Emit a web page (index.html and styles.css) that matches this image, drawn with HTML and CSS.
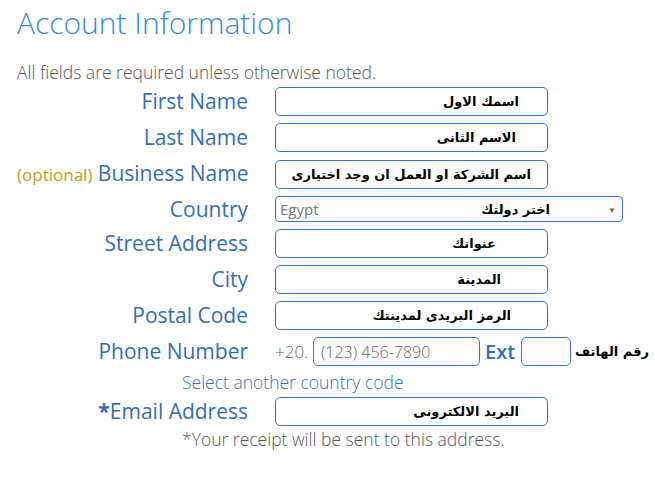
FILE: index.html
```html
<!DOCTYPE html>
<html lang="en">
<head>
<meta charset="utf-8">
<title>Account Information</title>
<link rel="stylesheet" href="styles.css">
</head>
<body>
<div class="page">
  <h1 class="title">Account Information</h1>
  <p class="note">All fields are required unless otherwise noted.</p>
  <div class="form">
    <div class="label">First Name</div>
    <div class="field"><div class="box pr-28"><span class="ar">اسمك الاول</span></div></div>

    <div class="label">Last Name</div>
    <div class="field"><div class="box pr-31"><span class="ar">الاسم الثانى</span></div></div>

    <div class="label"><span class="opt">(optional)</span> Business Name</div>
    <div class="field"><div class="box pr-16"><span class="ar">اسم الشركة او العمل ان وجد اختيارى</span></div></div>

    <div class="label label-short">Country</div>
    <div class="field">
      <div class="select">
        <span class="sel-val">Egypt</span>
        <span class="ar sel-ar">اختر دولتك</span>
        <span class="caret">▼</span>
      </div>
    </div>

    <div class="label">Street Address</div>
    <div class="field"><div class="box pr-51"><span class="ar">عنوانك</span></div></div>

    <div class="label">City</div>
    <div class="field"><div class="box pr-46"><span class="ar">المدينة</span></div></div>

    <div class="label">Postal Code</div>
    <div class="field"><div class="box pr-36"><span class="ar">الرمز البريدى لمدينتك</span></div></div>

    <div class="label">Phone Number</div>
    <div class="field phone">
      <span class="cc">+20.</span>
      <div class="box phone-box"><span class="ph">(123) 456-7890</span></div>
      <span class="ext">Ext</span>
      <div class="box ext-box"></div>
      <span class="ar phone-ar">رقم الهاتف</span>
    </div>

    <div class="help help-cc">Select another country code</div>

    <div class="label"><span class="star">*</span>Email Address</div>
    <div class="field"><div class="box pr-28"><span class="ar">البريد الالكترونى</span></div></div>

    <div class="help help-rc">*Your receipt will be sent to this address.</div>
  </div>
</div>
</body>
</html>
```
FILE: styles.css
```css
html, body {
  margin: 0;
  padding: 0;
  background: #ffffff;
}
.page {
  padding: 0 0 0 17px;
  font-family: "Open Sans", "Liberation Sans", sans-serif;
}
.title {
  margin: 0;
  padding-top: 2px;
  font-size: 30px;
  font-weight: 300;
  line-height: 42px;
  color: #3d86dc;
}
.note {
  margin: 17px 0 0 0;
  font-size: 17.5px;
  font-weight: 300;
  line-height: 22px;
  color: #555555;
}
.form {
  display: grid;
  grid-template-columns: 231px 1fr;
  column-gap: 27px;
  row-gap: 7px;
  margin-top: 4px;
  align-items: center;
}
.label {
  text-align: right;
  font-size: 21px;
  font-weight: 500;
  line-height: 29px;
  color: #376db3;
  white-space: nowrap;
}
.label-short {
  line-height: 26px;
}
.opt {
  font-size: 17px;
  color: #b3a41e;
}
.star {
  font-weight: 700;
}
.field {
  display: flex;
  align-items: center;
}
.box {
  box-sizing: border-box;
  width: 273px;
  height: 29px;
  border: 1px solid #3b78c4;
  border-radius: 5px;
  display: flex;
  align-items: center;
  justify-content: flex-end;
  background: #fff;
}
.ar {
  font-family: "DejaVu Sans", sans-serif;
  font-weight: 700;
  font-size: 13px;
  color: #000;
  direction: rtl;
  white-space: nowrap;
}
.pr-16 { padding-right: 16px; }
.pr-28 { padding-right: 28px; }
.pr-31 { padding-right: 31px; }
.pr-36 { padding-right: 36px; }
.pr-46 { padding-right: 46px; }
.pr-51 { padding-right: 51px; }
.select {
  box-sizing: border-box;
  width: 348px;
  height: 26px;
  border: 1px solid #3b78c4;
  border-radius: 4px;
  display: flex;
  align-items: center;
  padding: 0 6px 0 4px;
}
.sel-val {
  font-size: 15px;
  color: #777;
  flex: 1;
}
.sel-ar {
  margin-right: 58px;
}
.caret {
  font-size: 8px;
  color: #666;
}
.cc {
  font-size: 17px;
  font-weight: 300;
  color: #666;
  width: 38px;
}
.phone-box {
  width: 167px;
  justify-content: flex-start;
  padding-left: 7px;
}
.ph {
  font-size: 16px;
  font-weight: 300;
  color: #666;
}
.ext {
  font-size: 20px;
  font-weight: 600;
  color: #376db3;
  margin: 0 6px 0 5px;
}
.ext-box {
  width: 50px;
}
.phone-ar {
  margin-left: 4px;
}
.help {
  grid-column: 1 / 3;
  font-size: 17.5px;
  font-weight: 300;
  line-height: 24px;
}
.help-cc {
  color: #3a71b7;
  padding-left: 165px;
  margin: -3px 0 -4px;
}
.help-rc {
  color: #555;
  padding-left: 165px;
  margin-top: -6px;
}
```
